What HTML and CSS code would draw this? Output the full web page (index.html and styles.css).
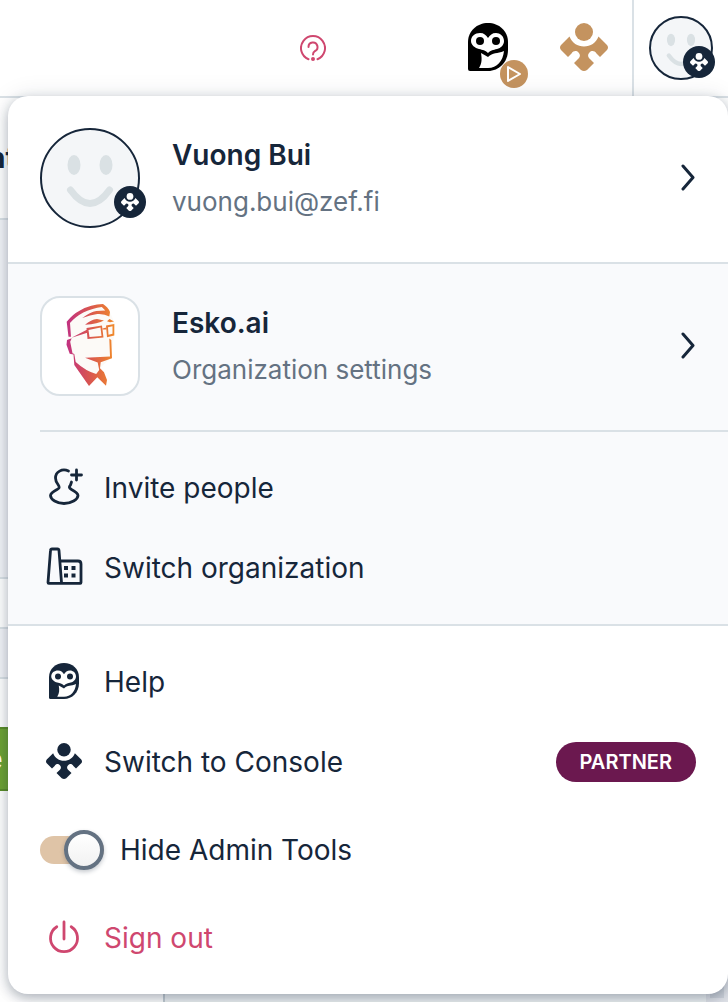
FILE: index.html
```html
<!DOCTYPE html>
<html lang="en">
<head>
  <meta charset="UTF-8">
  <meta name="viewport" content="width=device-width, initial-scale=1.0">
  <title>Account menu</title>
  <link rel="stylesheet" href="styles.css">
</head>
<body>
  <svg class="sprite" aria-hidden="true">
    <symbol id="owl" viewBox="0 0 40 48">
      <path fill="currentColor" d="M20 0C31 0 40 8 40 19v8c0 12-9 21-20 21H2a2 2 0 0 1-2-2V19C0 8 9 0 20 0z"/>
      <path class="owl-face" d="M12 10c4 0 6 2 8 5 2-3 4-5 8-5 4 0 8 3 8 8 0 4-3 7-7 8-4 1-6 1-9 4-3-3-5-3-9-4-4-1-8-4-8-8 0-5 4-8 9-8z"/>
      <path class="owl-face" d="M13 30l7 4c5-5 9-3 16-6-1 10-7 17-16 17h-9c3-5 3-9 2-15z"/>
      <circle fill="currentColor" cx="12" cy="18" r="4"/>
      <circle fill="currentColor" cx="28" cy="18" r="4"/>
    </symbol>
    <symbol id="partner" viewBox="0 0 48 48">
      <g fill="currentColor">
        <circle cx="24" cy="9" r="9"/>
        <path d="M9.500 13.500C12 20 17.500 23.500 24 23.500s12-3.500 14.500-10l8.500 8.500q2 2.500 0 5L40 34l-3.500-3.500c-2-3-5-3-7-1s-2 5 1 7l3.500 3.500-7 7q-3 2-6 0l-7-7 3.500-3.500c3-2 3-5 1-7s-5-2-7 1L8 34l-7-7q-2-2.500 0-5z"/>
      </g>
    </symbol>
    <symbol id="smiley" viewBox="2 2 96 96">
      <ellipse cx="34" cy="37" rx="6.500" ry="10"/>
      <ellipse cx="66" cy="37" rx="6.500" ry="10"/>
      <path d="M30.500 62q19.500 27 39 0" fill="none" stroke="#dae1e4" stroke-width="7" stroke-linecap="round"/>
    </symbol>
    <symbol id="chevron" viewBox="0 0 16 28">
      <path d="M3 2l10 11.500L3 25" fill="none" stroke="currentColor" stroke-width="3" stroke-linecap="round" stroke-linejoin="round"/>
    </symbol>
  </svg>

  <header class="topbar">
    <button class="topbar-button help-button" aria-label="Help">
      <svg width="26" height="26" viewBox="0 0 26 26" fill="none" stroke="currentColor" stroke-width="2" stroke-linecap="round">
        <path d="M8.500 24.200a12 12 0 1 1 9 0"/>
        <path d="M8.500 12a4.500 4.500 0 1 1 6.500 4c-1.500.8-2 1-2 3.500"/>
        <circle cx="13" cy="24" r="1" fill="currentColor"/>
      </svg>
    </button>
    <button class="topbar-button owl-button" aria-label="Assistant">
      <svg width="40" height="48"><use href="#owl"/></svg>
      <span class="play-badge">
        <svg width="16" height="16" viewBox="0 0 16 16" fill="none" stroke="#fff" stroke-width="2" stroke-linejoin="round"><path d="M2 1l12 7-12 7z"/></svg>
      </span>
    </button>
    <button class="topbar-button console-button" aria-label="Console">
      <svg width="48" height="48"><use href="#partner"/></svg>
    </button>
    <button class="topbar-button account-button" aria-label="Account">
      <span class="avatar avatar-small">
        <svg class="face"><use href="#smiley"/></svg>
        <span class="avatar-badge"><svg width="18" height="18"><use href="#partner"/></svg></span>
      </span>
    </button>
  </header>

  <main class="page">
    <div class="page-heading"><h1>nt</h1></div>
    <div class="page-gap"></div>
    <div class="page-row"></div>
    <div class="page-row shaded"></div>
    <div class="page-actions"><button class="save-button">e</button></div>
    <div class="page-footer">
      <div class="footer-side"></div>
      <div class="footer-main"></div>
      <div class="footer-scroll"></div>
    </div>
  </main>

  <nav class="menu" aria-label="Account">
    <section class="menu-section">
      <a class="account" href="#">
        <span class="avatar">
          <svg class="face"><use href="#smiley"/></svg>
          <span class="avatar-badge"><svg width="18" height="18"><use href="#partner"/></svg></span>
        </span>
        <span class="account-text">
          <strong>Vuong Bui</strong>
          <span>vuong.bui@zef.fi</span>
        </span>
        <svg class="chevron"><use href="#chevron"/></svg>
      </a>
    </section>

    <section class="menu-section tinted">
      <a class="account" href="#">
        <span class="org-logo">
          <svg width="96" height="96" viewBox="0 0 96 96">
            <defs>
              <linearGradient id="esko" gradientUnits="userSpaceOnUse" x1="24" y1="0" x2="72" y2="0">
                <stop offset="0" stop-color="#c03083"/>
                <stop offset=".5" stop-color="#d9564f"/>
                <stop offset="1" stop-color="#f0892b"/>
              </linearGradient>
            </defs>
            <path fill="#fcfaf7" d="M24 24L38 13 61 6l7 8 5 12-1 12-3 22-11 10-3 8-22-14-6-12z"/>
            <g fill="url(#esko)">
              <path d="M24.700 23.700Q31 16 38 12.500 49 6 61 6q5 3 7 8l-.7 4.500q-5-3-12-2.500-7 1-15 4 8-6 14-7l9-.5-3.500-3.500q-9 1-18.500 5.500Q33 19 28 25l1 13.700h-2.500z"/>
              <path d="M43 26.700q6-5 12-5.700l7 1.500q-6 3.500-19 4.200zM65 23.300l2.500-2.300 4.500 2.500-4 .8z"/>
              <path fill-rule="evenodd" d="M44.500 30l15.500-2.500 1.500 12L45.500 41zM46.500 32l1 7 12-1-1-8.500zM64 27.500l8.300-1.500v11.500L65 39.300zM66 29.300l.5 7.500 4-1v-7.500z"/>
              <path d="M45.300 31.500v3.200l-15.800 5zM60.500 30.500l4-1v2h-4z"/>
              <path d="M25 42l4.700-1.700-1.500 3.500 2.300 11.500 1.800.7 1.400 8q10 9 20.500 12l3-4-1.500-7.500L43 59.700l25-1.200-.7-18 2 1.500.7 18.300-11.300 4-.7 6 4 4 3 7.700-1 5.700-8.700-8.500L47 88 32.300 67l-.8-10.500-3.800-.8-3.200-9z"/>
            </g>
          </svg>
        </span>
        <span class="account-text">
          <strong>Esko.ai</strong>
          <span>Organization settings</span>
        </span>
        <svg class="chevron"><use href="#chevron"/></svg>
      </a>
      <ul class="menu-list divided">
        <li>
          <a class="menu-item" href="#">
            <svg class="icon" viewBox="0 0 48 48" fill="none" stroke="currentColor" stroke-width="2.800" stroke-linecap="round" stroke-linejoin="round">
              <path d="M28.500 7C22 4 15.500 8 15.500 14c0 3 1 4.500 2.500 6.500 2 3 1.500 3.500-1 5-4 2.200-6.500 4-6.500 6 0 4 6.500 8 13.500 8s14-4 14-8c0-2-2.500-3.800-6.500-6-2.500-1.500-2.800-2.500-1-4.500l1-3M36.500 6v10M31.500 11h10"/>
            </svg>
            Invite people
          </a>
        </li>
        <li>
          <a class="menu-item" href="#">
            <svg class="icon" viewBox="0 0 48 48" fill="none" stroke="currentColor" stroke-width="2.800" stroke-linejoin="round">
              <path d="M10.500 6.500q.2-1.500 1.500-1.500h5.500q1.300 0 1.500 1.500l2.500 32M10.500 6.500l-2.500 32q0 .8.800.8h31.400q.8 0 .8-.8V20q0-3-3-3H19.800"/>
              <path d="M24 24h4M31.500 24h4M24 31.500h4M31.500 31.500h4" stroke-width="4"/>
            </svg>
            Switch organization
          </a>
        </li>
      </ul>
    </section>

    <section class="menu-section">
      <ul class="menu-list">
        <li>
          <a class="menu-item" href="#">
            <span class="icon"><svg width="30" height="36"><use href="#owl"/></svg></span>
            Help
          </a>
        </li>
        <li>
          <a class="menu-item" href="#">
            <span class="icon"><svg width="36" height="36"><use href="#partner"/></svg></span>
            Switch to Console
            <span class="tag">PARTNER</span>
          </a>
        </li>
        <li>
          <label class="menu-item toggle">
            <input type="checkbox" role="switch" checked>
            Hide Admin Tools
          </label>
        </li>
        <li>
          <button class="menu-item sign-out">
            <svg class="icon" viewBox="0 0 48 48" fill="none" stroke="currentColor" stroke-width="2.800" stroke-linecap="round">
              <path d="M24 8v17M16.800 12.800a13.500 13.500 0 1 0 14.400 0"/>
            </svg>
            Sign out
          </button>
        </li>
      </ul>
    </section>
  </nav>
</body>
</html>
```

FILE: styles.css
```css
*,
*::before {
  box-sizing: border-box;
}

body {
  margin: 0;
  min-height: 100vh;
  display: flex;
  flex-direction: column;
  position: relative;
  font-family: Inter, sans-serif;
  font-size: 28px;
  color: #16263a;
  background: #fff;
}

button {
  font: inherit;
  color: inherit;
  background: none;
  border: none;
  padding: 0;
  cursor: pointer;
}

a {
  color: inherit;
  text-decoration: none;
}

.sprite {
  position: absolute;
  width: 0;
  height: 0;
}

.owl-face {
  fill: #fff;
}

/* Top bar */
.topbar {
  height: 98px;
  display: flex;
  justify-content: flex-end;
  border-bottom: 2px solid #dae1e6;
}

.topbar-button {
  display: flex;
  align-items: center;
  justify-content: center;
}

.help-button {
  color: #cf476f;
  margin-right: 142px;
}

.owl-button {
  position: relative;
  color: #000;
  padding-bottom: 2px;
  margin-right: 52px;
}

.play-badge {
  position: absolute;
  right: -20px;
  bottom: 8px;
  width: 28px;
  height: 28px;
  display: flex;
  align-items: center;
  justify-content: center;
  border-radius: 50%;
  background: #c4935f;
}

.console-button {
  color: #c4935f;
  padding-bottom: 2px;
  margin-right: 24px;
}

.account-button {
  width: 96px;
  border-left: 2px solid #dae1e6;
}

/* Avatars */
.avatar {
  position: relative;
  flex: none;
  width: 100px;
  height: 100px;
  border: 2px solid #16263a;
  border-radius: 50%;
  background: #f4f6f8;
}

.avatar-small {
  width: 64px;
  height: 64px;
}

.face {
  display: block;
  width: 100%;
  height: 100%;
  fill: #dae1e4;
}

.avatar-badge {
  position: absolute;
  right: -8px;
  bottom: 8px;
  width: 32px;
  height: 32px;
  display: flex;
  align-items: center;
  justify-content: center;
  border-radius: 50%;
  background: #16263a;
  color: #fff;
}

.avatar-small .avatar-badge {
  right: -4px;
  bottom: 0;
}

/* Page behind the menu */
.page {
  flex: 1;
  display: flex;
  flex-direction: column;
}

.page-heading {
  height: 122px;
  display: flex;
  align-items: center;
  border-bottom: 2px solid #dae1e6;
}

.page-heading h1 {
  margin: 0 0 0 -12px;
  font-size: 28px;
}

.page-gap {
  height: 359px;
  background: #f3f4f8;
  border-bottom: 2px solid #dae1e6;
}

.page-row {
  height: 50px;
  border-bottom: 2px solid #dae1e6;
}

.shaded {
  background: #f3f4f8;
}

.page-actions {
  flex: 1;
  padding: 48px 0;
}

.save-button {
  height: 64px;
  width: 96px;
  margin-left: -16px;
  text-align: left;
  font-weight: 600;
  color: #fff;
  background: #6da333;
  border: 2px solid #5a8d28;
}

.page-footer {
  height: 60px;
  display: flex;
}

.footer-side {
  width: 165px;
  border-right: 2px solid #c3ccd3;
}

.footer-main {
  flex: 1;
  background: #eef2f4;
}

.footer-scroll {
  width: 22px;
  border: 4px solid #dfe2e8;
  background: #cdd2da;
}

/* Account menu */
.menu {
  position: absolute;
  top: 96px;
  left: 8px;
  right: 0;
  overflow: hidden;
  border-radius: 20px;
  background: #fff;
  box-shadow: 0 0 24px rgba(22, 38, 58, 0.1), 0 4px 12px rgba(22, 38, 58, 0.3);
}

.menu-section + .menu-section {
  border-top: 2px solid #dae1e6;
}

.tinted {
  background: #f9fafc;
}

.account {
  display: flex;
  align-items: center;
  gap: 32px;
  padding: 32px 32px 34px;
}

.account-text {
  flex: 1;
  display: flex;
  flex-direction: column;
  gap: 13px;
  font-size: 26px;
  line-height: 34px;
  color: #647282;
}

.account-text strong {
  font-size: 28px;
  font-weight: 600;
  color: #16263a;
}

.chevron {
  width: 16px;
  height: 28px;
}

.org-logo {
  flex: none;
  width: 100px;
  height: 100px;
  overflow: hidden;
  border: 2px solid #dae1e6;
  border-radius: 20px;
  background: #fff;
}

.menu-list {
  margin: 0;
  padding: 16px 0;
  list-style: none;
}

.divided {
  margin-left: 32px;
  border-top: 2px solid #dae1e6;
}

.menu-item {
  width: 100%;
  height: 80px;
  display: flex;
  align-items: center;
  gap: 16px;
  padding: 0 32px;
  text-align: left;
  cursor: pointer;
}

.divided .menu-item {
  padding-left: 0;
}

.icon {
  flex: none;
  width: 48px;
  height: 48px;
  display: flex;
  align-items: center;
  justify-content: center;
}

span.icon {
  padding-bottom: 2px;
}

.tag {
  margin-left: auto;
  padding: 0 24px;
  border-radius: 20px;
  font-size: 20px;
  font-weight: 600;
  line-height: 40px;
  color: #fff;
  background: #6b184f;
}

.toggle {
  height: 96px;
}

.toggle input {
  appearance: none;
  flex: none;
  display: flex;
  align-items: center;
  justify-content: flex-end;
  width: 64px;
  height: 28px;
  margin: 0;
  border-radius: 14px;
  background: #dfc4a7;
  cursor: pointer;
}

.toggle input::before {
  content: "";
  flex: none;
  width: 40px;
  height: 40px;
  border: 4px solid #647282;
  border-radius: 50%;
  background: linear-gradient(#fff, #f2f2f2);
  box-shadow: 0 2px 4px rgba(22, 38, 58, 0.25);
}

.toggle input:not(:checked) {
  justify-content: flex-start;
}

.sign-out {
  color: #cf476f;
}
```
